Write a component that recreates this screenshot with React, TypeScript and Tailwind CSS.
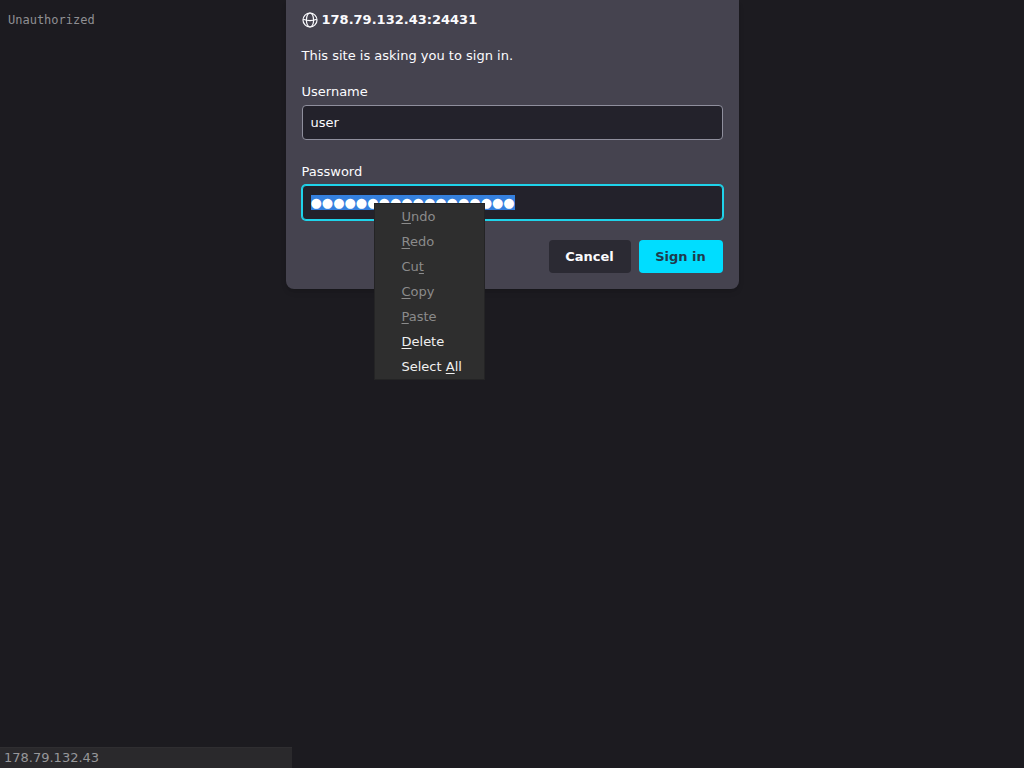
import { useEffect, useRef, useState } from 'react'

interface MenuEntry {
  label: string
  accessKey: number   // index of the underlined letter
  enabled: boolean
}

const MENU: MenuEntry[] = [
  { label: 'Undo', accessKey: 0, enabled: false },
  { label: 'Redo', accessKey: 0, enabled: false },
  { label: 'Cut', accessKey: 2, enabled: false },
  { label: 'Copy', accessKey: 0, enabled: false },
  { label: 'Paste', accessKey: 0, enabled: false },
  { label: 'Delete', accessKey: 0, enabled: true },
  { label: 'Select All', accessKey: 7, enabled: true },
]

function GlobeIcon() {
  return (
    <svg viewBox="0 0 16 16" className="size-4 shrink-0" fill="none" stroke="currentColor" strokeWidth="1.2" aria-hidden="true">
      <circle cx="8" cy="8" r="7" />
      <ellipse cx="8" cy="8" rx="3.6" ry="7" />
      <path d="M1.2 7.2c4 1.6 9.6 1.6 13.6 0" />
    </svg>
  )
}

function ContextMenu({ onDelete, onSelectAll }: { onDelete: () => void; onSelectAll: () => void }) {
  return (
    <div role="menu" className="absolute left-[72px] top-[41px] z-10 flex w-[111px] flex-col border border-[#242425] bg-[#2e2e2e]">
      {MENU.map(({ label, accessKey, enabled }) => (
        <button
          key={label}
          type="button"
          role="menuitem"
          disabled={!enabled}
          onClick={label === 'Delete' ? onDelete : onSelectAll}
          className="h-[25px] whitespace-pre pl-[27px] text-left text-[#f0f0f0] disabled:text-[#8b8b8b]"
        >
          {label.slice(0, accessKey)}
          <span className="underline underline-offset-2">{label[accessKey]}</span>
          {label.slice(accessKey + 1)}
        </button>
      ))}
    </div>
  )
}

export default function App() {
  const [username, setUsername] = useState('user')
  const [password, setPassword] = useState('●'.repeat(18))
  const passwordRef = useRef<HTMLInputElement>(null)

  const selectPassword = () => {
    passwordRef.current?.focus({ preventScroll: true })
    passwordRef.current?.select()
  }

  useEffect(selectPassword, [])

  return (
    <div className="relative flex min-h-screen flex-col justify-between bg-[#1c1b20] font-['DejaVu_Sans',sans-serif] text-[13px] leading-5 text-[#fbfbfe]">
      <pre className="p-2 pt-2.5 font-['DejaVu_Sans_Mono',monospace] text-[12px] text-[#8f8f93]">Unauthorized</pre>

      {/* Sign-in prompt */}
      <div className="absolute inset-x-0 top-0 flex justify-center">
        <form
          onSubmit={(e) => e.preventDefault()}
          className="w-full max-w-[453px] rounded-b-lg bg-[#45434f] px-4 pb-4 pt-2.5 shadow-md"
        >
          <h1 className="flex items-center gap-1 font-bold">
            <GlobeIcon />
            178.79.132.43:24431
          </h1>
          <p className="mt-4">This site is asking you to sign in.</p>

          <div className="mt-4 flex flex-col gap-[22px]">
            <div className="flex flex-col gap-[3px]">
              <label htmlFor="username">Username</label>
              <input
                id="username"
                type="text"
                value={username}
                onChange={(e) => setUsername(e.target.value)}
                className="h-[35px] w-full rounded border border-[#8f8f9d] bg-[#23222b] px-2 outline-none"
              />
            </div>
            <div className="relative flex flex-col gap-[3px]">
              <label htmlFor="password">Password</label>
              <input
                id="password"
                ref={passwordRef}
                type="text"
                autoComplete="off"
                value={password}
                onChange={(e) => setPassword(e.target.value)}
                className="h-[35px] w-full rounded border border-[#1fd3ea] bg-[#23222b] px-2 outline-none ring-1 ring-[#1fd3ea] selection:bg-[#3580de] selection:text-white"
              />
              <ContextMenu onDelete={() => setPassword('')} onSelectAll={selectPassword} />
            </div>
          </div>

          <div className="mt-5 flex justify-end gap-2 font-bold">
            <button type="button" className="h-[33px] w-[82px] rounded bg-[#2b2a33]">
              Cancel
            </button>
            <button type="submit" className="h-[33px] w-[84px] rounded bg-[#00ddff] text-[#1f3a4c]">
              Sign in
            </button>
          </div>
        </form>
      </div>

      {/* Status panel */}
      <div className="w-[292px] border-t border-[#2f2e31] bg-[#2a292c] px-1 text-[#97979a]">178.79.132.43</div>
    </div>
  )
}
